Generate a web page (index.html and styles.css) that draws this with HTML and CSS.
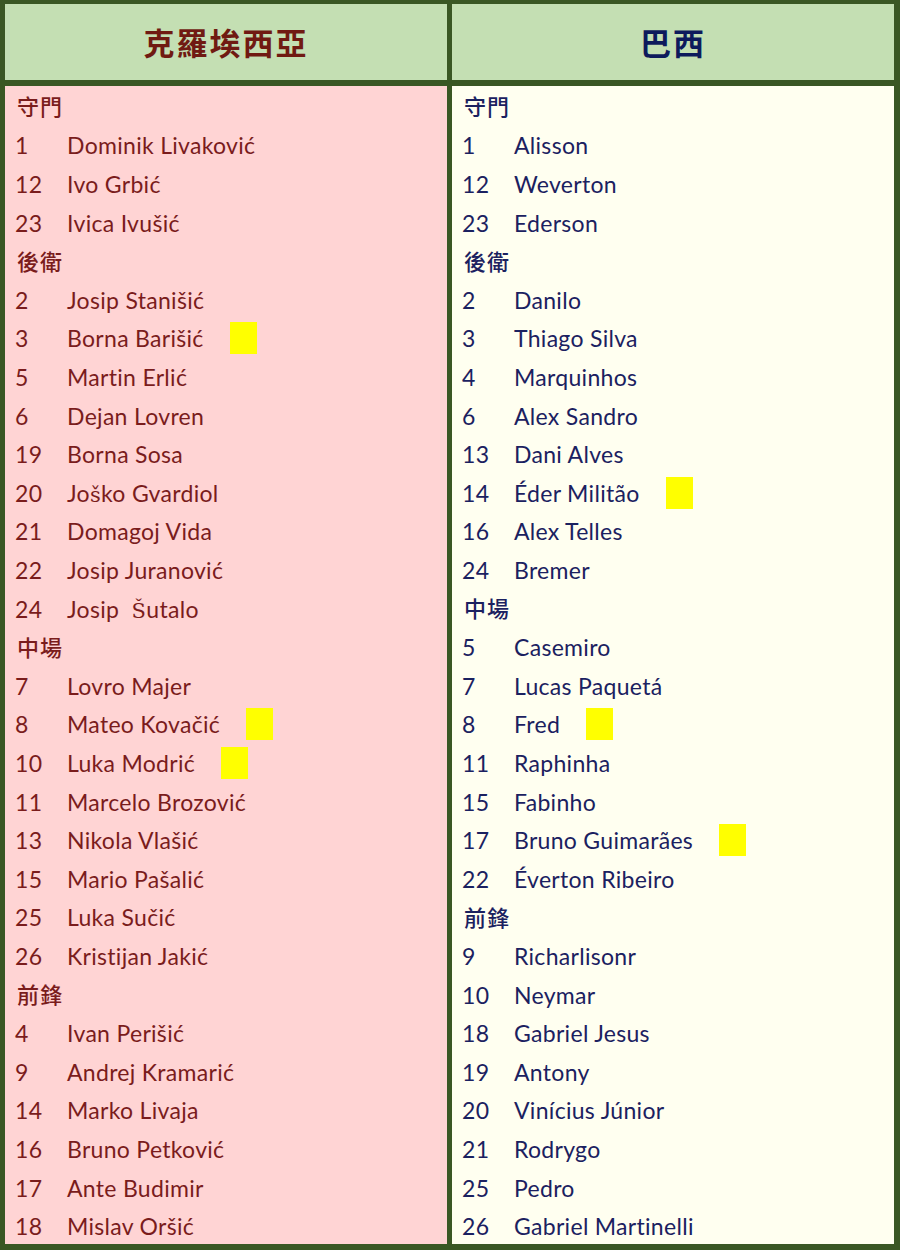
FILE: index.html
```html
<!DOCTYPE html>
<html lang="zh-Hant">
<head>
<meta charset="utf-8">
<title>克羅埃西亞 vs 巴西</title>
<link rel="stylesheet" href="styles.css">
</head>
<body>
<div class="board">
  <div class="head hr">克羅埃西亞</div>
  <div class="head hb">巴西</div>

  <div class="body cr">
    <div class="cat">守門</div>
    <div class="row"><span class="n">1</span><span class="p">Dominik Livaković</span></div>
    <div class="row"><span class="n">12</span><span class="p">Ivo Grbić</span></div>
    <div class="row"><span class="n">23</span><span class="p">Ivica Ivušić</span></div>
    <div class="cat">後衛</div>
    <div class="row"><span class="n">2</span><span class="p">Josip Stanišić</span></div>
    <div class="row"><span class="n">3</span><span class="p">Borna Barišić</span><span class="mark"></span></div>
    <div class="row"><span class="n">5</span><span class="p">Martin Erlić</span></div>
    <div class="row"><span class="n">6</span><span class="p">Dejan Lovren</span></div>
    <div class="row"><span class="n">19</span><span class="p">Borna Sosa</span></div>
    <div class="row"><span class="n">20</span><span class="p">Jo<span class="alt">š</span>ko Gvardiol</span></div>
    <div class="row"><span class="n">21</span><span class="p">Domagoj Vida</span></div>
    <div class="row"><span class="n">22</span><span class="p">Josip Juranović</span></div>
    <div class="row"><span class="n">24</span><span class="p">Josip&nbsp; <span class="alt">Š</span>utalo</span></div>
    <div class="cat">中場</div>
    <div class="row"><span class="n">7</span><span class="p">Lovro Majer</span></div>
    <div class="row"><span class="n">8</span><span class="p">Mateo Kovačić</span><span class="mark"></span></div>
    <div class="row"><span class="n">10</span><span class="p">Luka Modrić</span><span class="mark"></span></div>
    <div class="row"><span class="n">11</span><span class="p">Marcelo Brozović</span></div>
    <div class="row"><span class="n">13</span><span class="p">Nikola Vlašić</span></div>
    <div class="row"><span class="n">15</span><span class="p">Mario Pašalić</span></div>
    <div class="row"><span class="n">25</span><span class="p">Luka Sučić</span></div>
    <div class="row"><span class="n">26</span><span class="p">Kristijan Jakić</span></div>
    <div class="cat">前鋒</div>
    <div class="row"><span class="n">4</span><span class="p">Ivan Perišić</span></div>
    <div class="row"><span class="n">9</span><span class="p">Andrej Kramarić</span></div>
    <div class="row"><span class="n">14</span><span class="p">Marko Livaja</span></div>
    <div class="row"><span class="n">16</span><span class="p">Bruno Petković</span></div>
    <div class="row"><span class="n">17</span><span class="p">Ante Budimir</span></div>
    <div class="row"><span class="n">18</span><span class="p">Mislav Oršić</span></div>
  </div>

  <div class="body cb">
    <div class="cat">守門</div>
    <div class="row"><span class="n">1</span><span class="p">Alisson</span></div>
    <div class="row"><span class="n">12</span><span class="p">Weverton</span></div>
    <div class="row"><span class="n">23</span><span class="p">Ederson</span></div>
    <div class="cat">後衛</div>
    <div class="row"><span class="n">2</span><span class="p">Danilo</span></div>
    <div class="row"><span class="n">3</span><span class="p">Thiago Silva</span></div>
    <div class="row"><span class="n">4</span><span class="p">Marquinhos</span></div>
    <div class="row"><span class="n">6</span><span class="p">Alex Sandro</span></div>
    <div class="row"><span class="n">13</span><span class="p">Dani Alves</span></div>
    <div class="row"><span class="n">14</span><span class="p">Éder Militão</span><span class="mark"></span></div>
    <div class="row"><span class="n">16</span><span class="p">Alex Telles</span></div>
    <div class="row"><span class="n">24</span><span class="p">Bremer</span></div>
    <div class="cat">中場</div>
    <div class="row"><span class="n">5</span><span class="p">Casemiro</span></div>
    <div class="row"><span class="n">7</span><span class="p">Lucas Paquetá</span></div>
    <div class="row"><span class="n">8</span><span class="p">Fred</span><span class="mark"></span></div>
    <div class="row"><span class="n">11</span><span class="p">Raphinha</span></div>
    <div class="row"><span class="n">15</span><span class="p">Fabinho</span></div>
    <div class="row"><span class="n">17</span><span class="p">Bruno Guimarães</span><span class="mark"></span></div>
    <div class="row"><span class="n">22</span><span class="p">Éverton Ribeiro</span></div>
    <div class="cat">前鋒</div>
    <div class="row"><span class="n">9</span><span class="p">Richarlisonr</span></div>
    <div class="row"><span class="n">10</span><span class="p">Neymar</span></div>
    <div class="row"><span class="n">18</span><span class="p">Gabriel Jesus</span></div>
    <div class="row"><span class="n">19</span><span class="p">Antony</span></div>
    <div class="row"><span class="n">20</span><span class="p">Vinícius Júnior</span></div>
    <div class="row"><span class="n">21</span><span class="p">Rodrygo</span></div>
    <div class="row"><span class="n">25</span><span class="p">Pedro</span></div>
    <div class="row"><span class="n">26</span><span class="p">Gabriel Martinelli</span></div>
  </div>
</div>
</body>
</html>
```

FILE: styles.css
```css
html, body {
  margin: 0;
  padding: 0;
}

body {
  width: 900px;
  height: 1250px;
  font-family: Lato, "Noto Sans", "Noto Sans CJK TC", sans-serif;
}

.board {
  box-sizing: border-box;
  width: 900px;
  height: 1250px;
  background: #3a5724;
  padding: 4px 6px 6px 5px;
  display: grid;
  grid-template-columns: 442px 442px;
  grid-template-rows: 76px 1158px;
  column-gap: 5px;
  row-gap: 6px;
}

.head {
  background: #c4dfb3;
  display: flex;
  align-items: center;
  justify-content: center;
  font-family: "Noto Sans CJK TC", sans-serif;
  font-weight: 700;
  font-size: 31px;
  letter-spacing: 2px;
  padding-bottom: 2px;
}

.hr { color: #701a12; }
.hb { color: #0d1a5c; }

.body {
  display: grid;
  grid-template-rows: repeat(30, 1fr);
  padding-left: 10px;
}

.cr {
  background: #ffd4d4;
  color: #7a1c1c;
}

.cb {
  background: #fffff0;
  color: #1b2160;
}

.row {
  display: flex;
  align-items: center;
  font-size: 23px;
  letter-spacing: 0.3px;
  font-variant-ligatures: none;
  padding-top: 3px;
}

.n {
  width: 52px;
  flex: none;
}

.cat {
  display: flex;
  align-items: center;
  font-family: "Noto Sans CJK TC", sans-serif;
  font-weight: 500;
  font-size: 22px;
  letter-spacing: 1px;
  padding-left: 2px;
}

.alt {
  font-family: "DejaVu Serif", serif;
  font-size: 21px;
}

.mark {
  display: inline-block;
  width: 27px;
  height: 32px;
  background: #ffff00;
  margin-left: 26px;
}
```
